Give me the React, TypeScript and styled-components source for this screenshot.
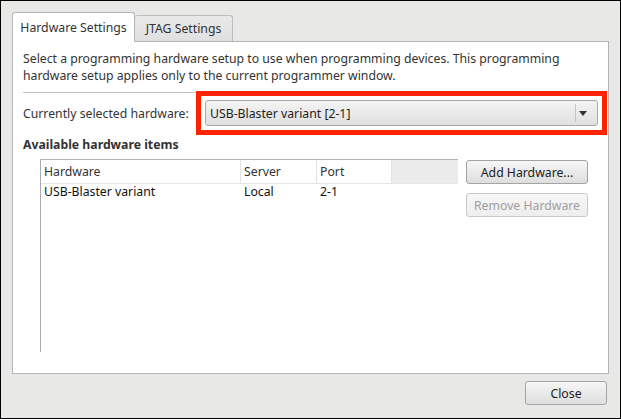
import React from "react";
import styled, { createGlobalStyle } from "styled-components";

const Global = createGlobalStyle`
  html, body { margin: 0; padding: 0; background: #e8e8e7; }
  * { box-sizing: border-box; }
`;

const Window = styled.div`
  width: 621px;
  height: 419px;
  border: 1px solid #000;
  background: #e8e8e7;
  padding: 11px 11px 13px 11px;
  display: flex;
  flex-direction: column;
  font-family: "Noto Sans", sans-serif;
  font-size: 12.25px;
  line-height: 17px;
  color: #333;
`;

const TabBar = styled.div`
  display: flex;
  align-items: flex-start;
  height: 29px;
  position: relative;
  z-index: 1;
`;

const Tab = styled.div<{ $active?: boolean; $w: number }>`
  width: ${(p) => p.$w}px;
  height: ${(p) => (p.$active ? 30 : 26)}px;
  margin-top: ${(p) => (p.$active ? 0 : 3)}px;
  background: ${(p) => (p.$active ? "#fff" : "linear-gradient(#e9e9e9, #e0e0e0)")};
  border: 1px solid ${(p) => (p.$active ? "#b4b4b4" : "#bcbcbc")};
  border-bottom: none;
  border-left: ${(p) => (p.$active ? "1px solid #b4b4b4" : "none")};
  border-radius: 3px 3px 0 0;
  display: flex;
  align-items: center;
  justify-content: center;
  padding-bottom: ${(p) => (p.$active ? 1 : 0)}px;
  color: #333;
  white-space: nowrap;
`;

const Pane = styled.div`
  flex: 1;
  background: #fff;
  border: 1px solid #b4b4b4;
  padding: 8px 10px 0 10px;
  display: flex;
  flex-direction: column;
`;

const Description = styled.p`
  margin: 0;
  line-height: 17px;
  color: #333;
`;

const Separator = styled.div`
  height: 1px;
  background: #c4c4c4;
  margin-top: 8px;
`;

const HardwareRow = styled.div`
  display: flex;
  align-items: center;
  margin-top: 7px;
`;

const Label = styled.span`
  width: 182px;
  flex: none;
  white-space: nowrap;
  color: #333;
`;

const ComboWrap = styled.div`
  position: relative;
  flex: 1;
`;

const Combo = styled.div`
  height: 26px;
  border: 1px solid #a8a8a8;
  border-radius: 3px;
  background: linear-gradient(#f4f4f4, #e0e0e0);
  display: flex;
  align-items: center;
  padding-left: 4px;
  color: #222;
`;

const ComboText = styled.span`
  flex: 1;
  white-space: nowrap;
`;

const ComboArrow = styled.div`
  width: 22px;
  align-self: stretch;
  margin: 3px 0;
  border-left: 1px solid #c4c4c4;
  display: flex;
  align-items: center;
  padding-left: 3px;
`;

const Highlight = styled.div`
  position: absolute;
  top: -9px;
  left: -9px;
  right: -9px;
  bottom: -9px;
  border: 5px solid #ff2300;
  pointer-events: none;
`;

const SectionTitle = styled.div`
  font-weight: bold;
  margin-top: 10px;
  color: #333;
`;

const ItemsRow = styled.div`
  display: flex;
  align-items: flex-start;
  margin-top: 6px;
  padding-left: 17px;
`;

const Table = styled.div`
  width: 418px;
  height: 193px;
  border-left: 1px solid #ababab;
  border-top: 1px solid #b4b4b4;
  display: flex;
  flex-direction: column;
`;

const HeaderRow = styled.div`
  display: flex;
  height: 24px;
  border-bottom: 1px solid #e6e6e6;
`;

const HeaderCell = styled.div<{ $w: number }>`
  width: ${(p) => p.$w}px;
  flex: none;
  border-right: 1px solid #e2e2e2;
  display: flex;
  align-items: center;
  padding-left: 3px;
  color: #333;
  white-space: nowrap;
`;

const HeaderFiller = styled.div`
  flex: 1;
  background: #ebebeb;
`;

const BodyRow = styled.div`
  display: flex;
  height: 16px;
  line-height: 15px;
  align-items: flex-start;
`;

const Cell = styled.div<{ $w: number }>`
  width: ${(p) => p.$w}px;
  flex: none;
  padding-left: 3px;
  color: #111;
  white-space: nowrap;
`;

const ButtonColumn = styled.div`
  display: flex;
  flex-direction: column;
  gap: 9px;
  margin-left: 8px;
  margin-top: 1px;
`;

const Button = styled.button<{ $w: number }>`
  width: ${(p) => p.$w}px;
  height: 24px;
  font-family: "Noto Sans", sans-serif;
  font-size: 12.25px;
  color: #222;
  border: 1px solid #a4a4a4;
  border-radius: 3px;
  background: linear-gradient(#f6f6f6, #dedede);
  padding: 0;
  display: flex;
  align-items: center;
  justify-content: center;
  &:disabled {
    color: #a0a0a0;
    border-color: #c8c8c8;
    background: linear-gradient(#f7f7f7, #eeeeee);
  }
`;

const Footer = styled.div`
  display: flex;
  justify-content: flex-end;
  margin-top: 7px;
  padding-right: 2px;
`;

export default function App() {
  return (
    <>
      <Global />
      <Window>
        <TabBar>
          <Tab $active $w={123}>Hardware Settings</Tab>
          <Tab $w={98}>JTAG Settings</Tab>
        </TabBar>
        <Pane>
          <Description>
            Select a programming hardware setup to use when programming devices. This programming
            <br />
            hardware setup applies only to the current programmer window.
          </Description>
          <Separator />
          <HardwareRow>
            <Label>Currently selected hardware:</Label>
            <ComboWrap>
              <Combo>
                <ComboText>USB-Blaster variant [2-1]</ComboText>
                <ComboArrow>
                  <svg width="8" height="5" viewBox="0 0 8 5">
                    <path d="M0 0 L8 0 L4 5 Z" fill="#333" />
                  </svg>
                </ComboArrow>
              </Combo>
              <Highlight />
            </ComboWrap>
          </HardwareRow>
          <SectionTitle>Available hardware items</SectionTitle>
          <ItemsRow>
            <Table>
              <HeaderRow>
                <HeaderCell $w={200}>Hardware</HeaderCell>
                <HeaderCell $w={76}>Server</HeaderCell>
                <HeaderCell $w={75}>Port</HeaderCell>
                <HeaderFiller />
              </HeaderRow>
              <BodyRow>
                <Cell $w={200}>USB-Blaster variant</Cell>
                <Cell $w={76}>Local</Cell>
                <Cell $w={75}>2-1</Cell>
              </BodyRow>
            </Table>
            <ButtonColumn>
              <Button $w={122}>Add Hardware...</Button>
              <Button $w={122} disabled>
                Remove Hardware
              </Button>
            </ButtonColumn>
          </ItemsRow>
        </Pane>
        <Footer>
          <Button $w={82}>Close</Button>
        </Footer>
      </Window>
    </>
  );
}
